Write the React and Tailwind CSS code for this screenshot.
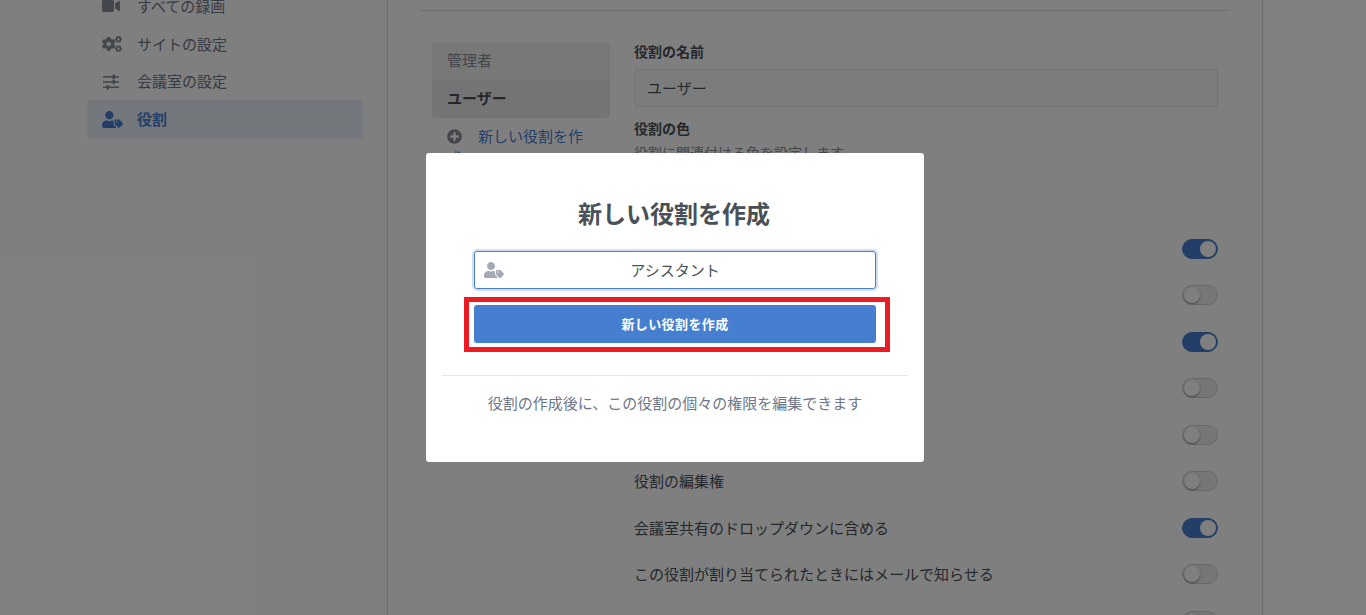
import React from 'react';
import { FaVideo, FaCogs, FaUserTag, FaPlusCircle } from 'react-icons/fa';

const Toggle = ({ on }) => (
    <div className={`w-[36px] h-[20px] rounded-full border flex items-center px-[1px] ${on ? 'bg-[#467fcf] border-[#467fcf] justify-end' : 'bg-[#e9ecef] border-[#cdd1d5] justify-start'}`}>
        <div className={`w-[16px] h-[16px] rounded-full bg-white ${on ? '' : 'shadow-[0_1px_2px_rgba(0,0,0,0.4)]'}`}></div>
    </div>
);

const SlidersIcon = () => (
    <svg width="18" height="16" viewBox="0 0 18 16" fill="currentColor">
        <rect x="1" y="2" width="16" height="1.6" />
        <rect x="1" y="7.2" width="16" height="1.6" />
        <rect x="1" y="12.4" width="16" height="1.6" />
        <rect x="10.5" y="0.6" width="2.4" height="4.4" />
        <rect x="10.5" y="5.8" width="2.4" height="4.4" />
        <rect x="4.5" y="11" width="2.4" height="4.4" />
    </svg>
);

const perms = [
    ['会議室の作成を許可する', true],
    ['サーバーの録画を管理する', false],
    ['サーバーの会議室を管理する', true],
    ['ユーザーの管理を許可する', false],
    ['サイトの設定を管理する', false],
    ['役割の編集権', false],
    ['会議室共有のドロップダウンに含める', true],
    ['この役割が割り当てられたときにはメールで知らせる', false],
    ['この役割の権限を他のユーザーにも自動的に適用する', false],
];

const NavItem = ({ icon, label, active, height }) => (
    <div className={`flex items-center rounded-[3px] pl-[15px] ${height} ${active ? 'bg-[#e8eef7] text-[#467fcf] font-bold' : 'text-[#6e7687]'}`}>
        <span className={`w-[36px] flex items-center ${active ? 'text-[#467fcf]' : 'text-[#868e96]'}`}>{icon}</span>
        <span className="-ml-[1px]">{label}</span>
    </div>
);

export default function App() {
    return (
        <div className="relative h-screen overflow-hidden bg-white text-[15px] text-[#495057] font-['Noto_Sans_CJK_JP','Noto_Sans',sans-serif]">
            {/* page behind the dialog, scrolled down a little */}
            <div className="flex h-[calc(100%+13px)] -mt-[13px]">
                <div className="w-[388px] shrink-0 border-r border-[#d8dbde] pl-[87px] pr-[24px]">
                    <NavItem height="h-[38px]" icon={<FaVideo size={18} />} label="すべての録画" />
                    <NavItem height="h-[38px]" icon={<FaCogs size={20} />} label="サイトの設定" />
                    <NavItem height="h-[37px]" icon={<SlidersIcon />} label="会議室の設定" />
                    <NavItem height="h-[39px]" icon={<FaUserTag size={21} />} label="役割" active />
                </div>

                <div className="w-[875px] shrink-0 border-r border-[#d8dbde] pl-[32px] pr-[32px]">
                    <div className="h-[24px] border-b border-[#d8dbde]"></div>
                    <div className="flex mt-[31px] pl-[12px] pr-[12px]">
                        <div className="w-[178px] shrink-0">
                            <div className="h-[37px] flex items-center px-[15px] bg-[#f0f0f0] rounded-t-[3px] text-[#868e96]">管理者</div>
                            <div className="h-[39px] flex items-center px-[15px] bg-[#e9e9e9] rounded-b-[3px] font-bold">ユーザー</div>
                            <div className="mt-[7px] pl-[15px] pr-[15px] leading-[22px] text-[#467fcf]">
                                <FaPlusCircle size={15} className="inline text-[#868e96] mr-[16px] align-[-2px]" />
                                新しい役割を作成
                            </div>
                        </div>
                        <div className="flex-1 ml-[24px] -mt-[1px]">
                            <div className="font-bold text-[14px] leading-[20px]">役割の名前</div>
                            <div className="mt-[8px] h-[38px] flex items-center px-[12px] bg-[#f6fbf8] border border-[#dce5e0] rounded-[3px]">ユーザー</div>
                            <div className="mt-[11px] font-bold text-[14px] leading-[20px]">役割の色</div>
                            <div className="mt-[4px] text-[14px] leading-[20px] text-[#868e96]">役割に関連付ける色を設定します</div>
                            <div className="mt-[63.5px]">
                                {perms.map(([label, on], i) => (
                                    <div key={i} className="h-[46.5px] flex items-center justify-between">
                                        <span className={i === 8 ? 'pt-[3px]' : ''}>{label}</span>
                                        <Toggle on={on} />
                                    </div>
                                ))}
                            </div>
                        </div>
                    </div>
                </div>
            </div>

            <div className="absolute inset-0 bg-black/50"></div>

            {/* dialog */}
            <div className="absolute left-[426px] top-[153px] w-[498px] h-[309px] bg-white rounded-[3px] px-[16px]">
                <h3 className="mt-[45px] text-center text-[24px] leading-[32px] font-bold text-[#495057] -translate-x-[1px] -translate-y-[1px]">新しい役割を作成</h3>
                <div className="relative mt-[21px] mx-[32px]">
                    <FaUserTag size={20} className="absolute left-[10px] top-[9px] text-[#a3aab5]" />
                    <div className="h-[38px] flex items-center justify-center border border-[#467fcf] rounded-[3px] shadow-[0_0_0_2px_rgba(70,127,207,0.25)] text-[#495057]">アシスタント</div>
                </div>
                <div className="mt-[8px] ml-[22px] w-[426px] h-[55px] border-[5px] border-[#ed1c24] pl-[5px] pr-[9px] pt-[3px]">
                    <button className="w-full h-[38px] bg-[#467fcf] text-white text-[13px] font-bold tracking-[0.03em] rounded-[3px]">新しい役割を作成</button>
                </div>
                <div className="mt-[23px] border-t border-[#e4e6e8]"></div>
                <p className="mt-[16px] text-center text-[#6e7687] leading-[22px]">役割の作成後に、この役割の個々の権限を編集できます</p>
            </div>
        </div>
    );
}
